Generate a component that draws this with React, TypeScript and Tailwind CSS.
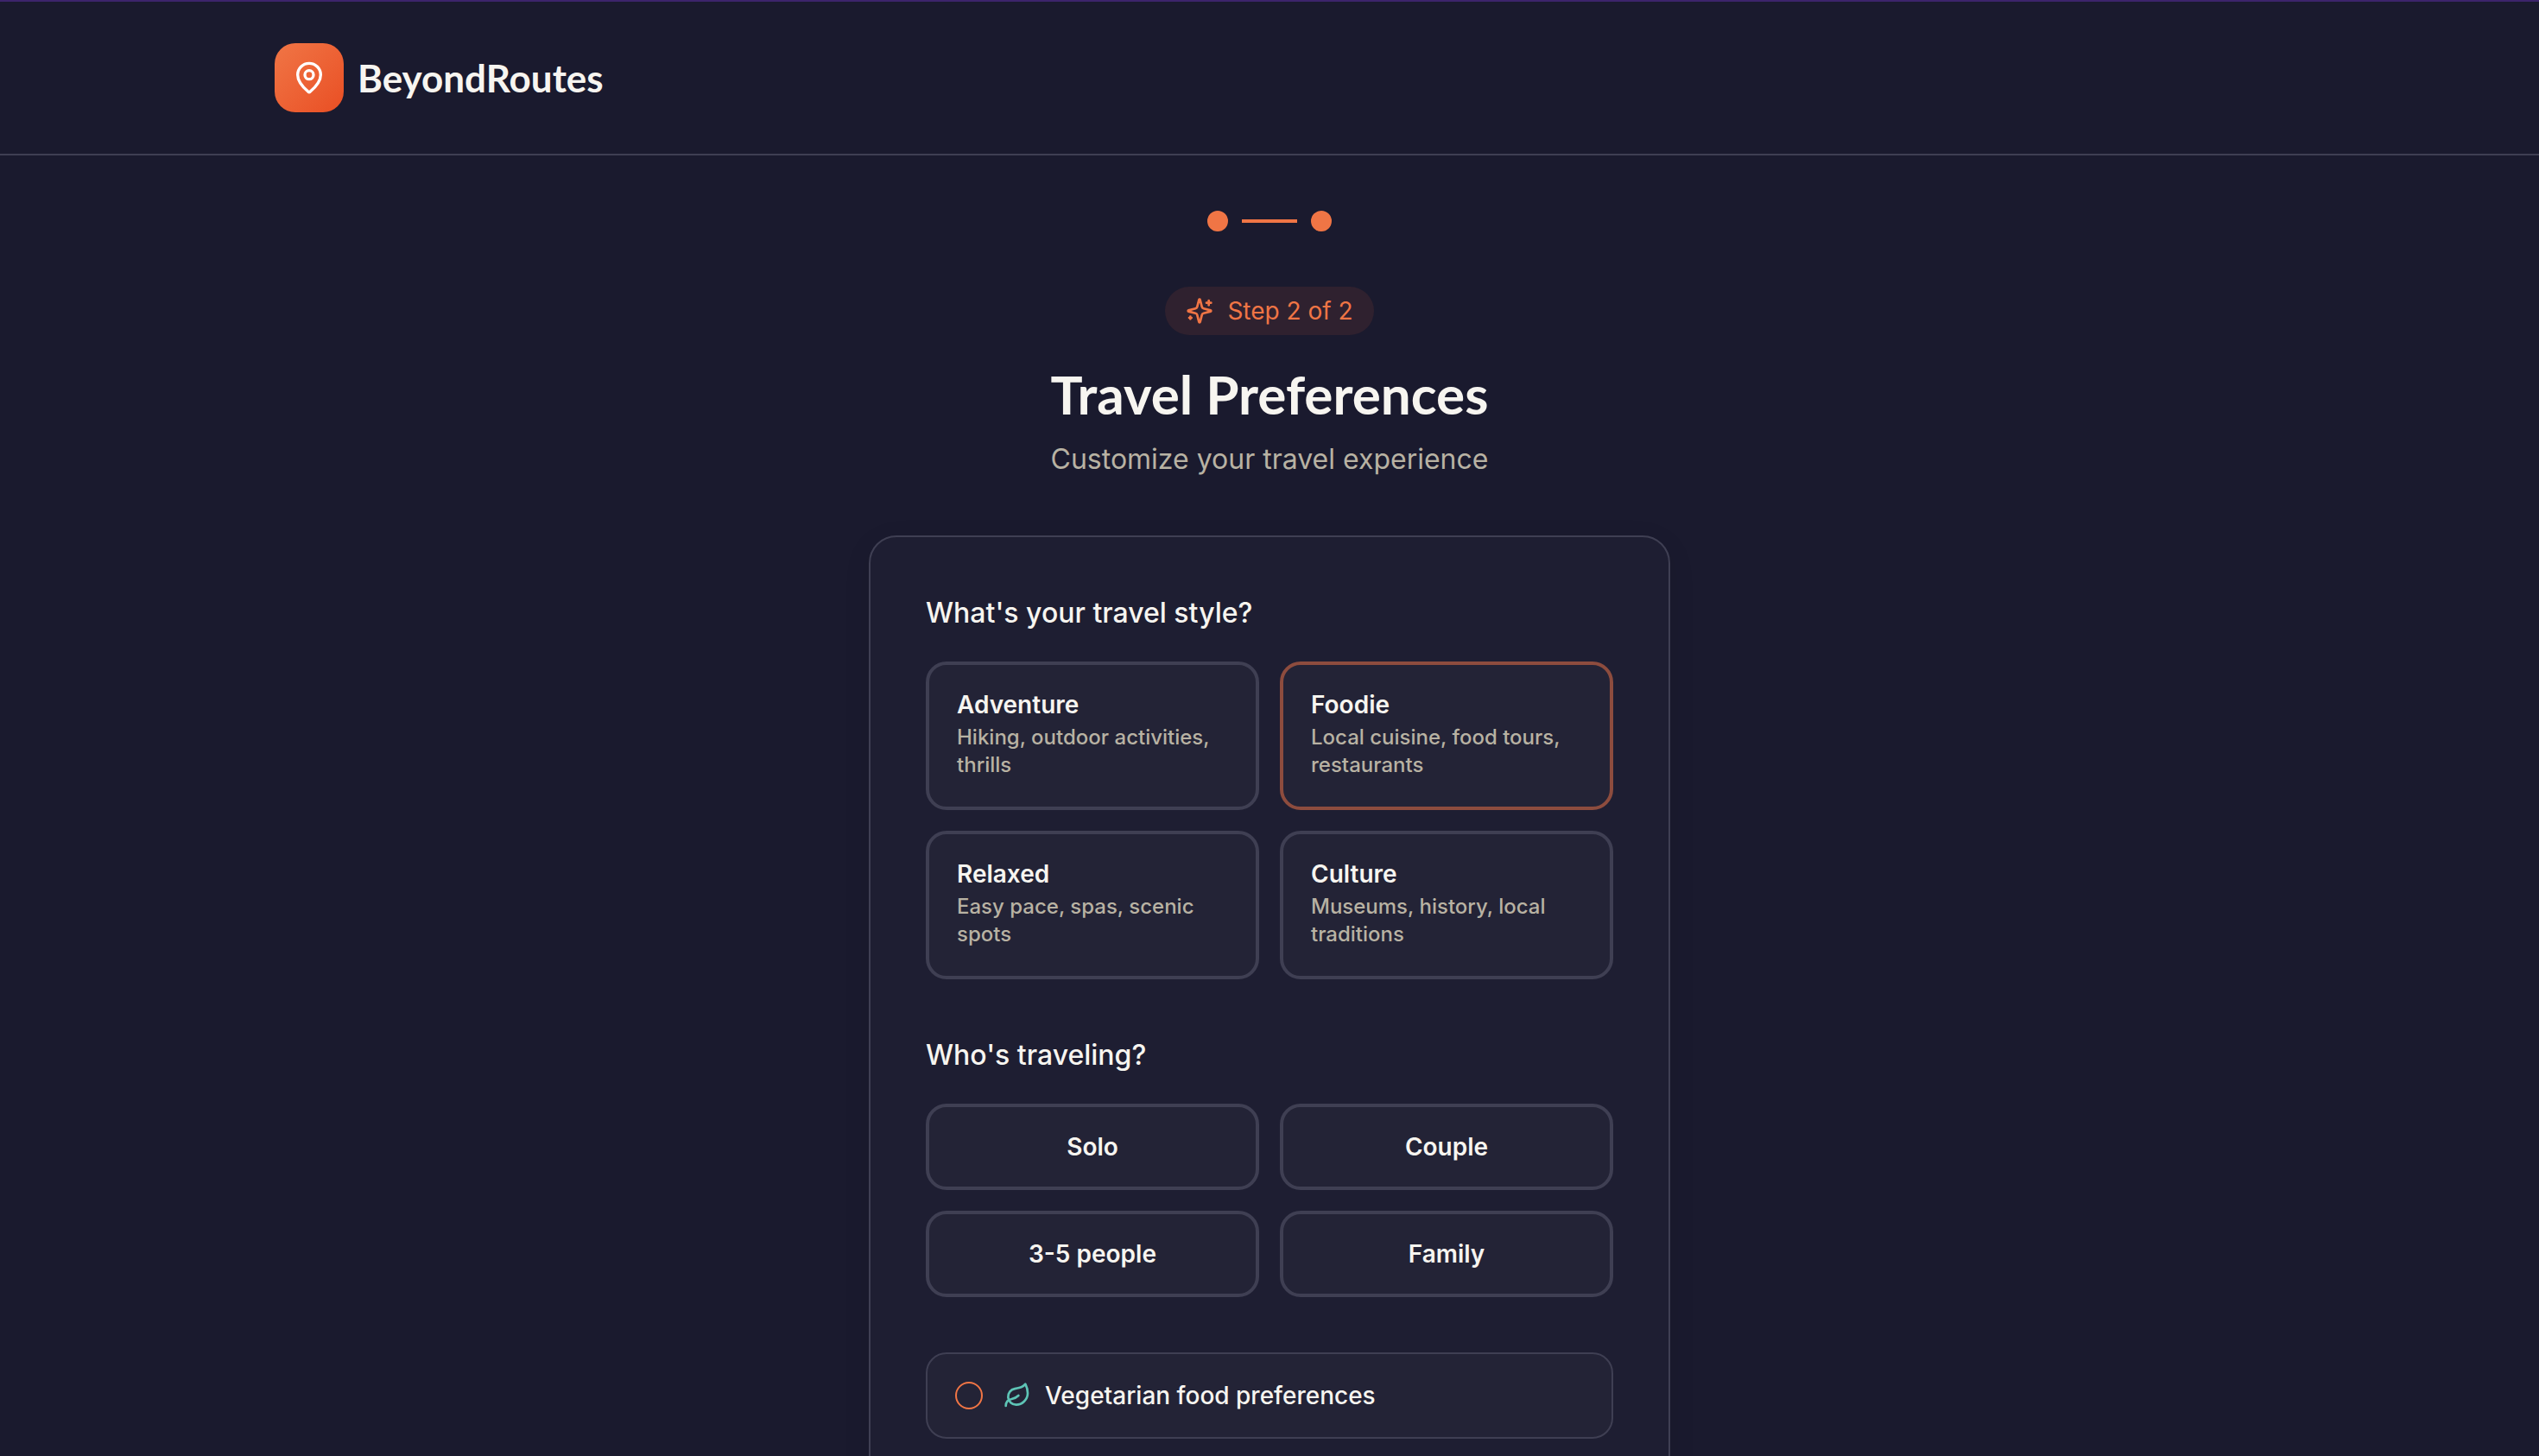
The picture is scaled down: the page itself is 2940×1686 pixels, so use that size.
import React, { useState } from "react";
import { Leaf, MapPin } from "lucide-react";

const travelStyles = [
  { name: "Adventure", description: "Hiking, outdoor activities, thrills" },
  { name: "Foodie", description: "Local cuisine, food tours, restaurants" },
  { name: "Relaxed", description: "Easy pace, spas, scenic spots" },
  { name: "Culture", description: "Museums, history, local traditions" },
];

const groupSizes = ["Solo", "Couple", "3-5 people", "Family"];

// Star with a plus at the top right and a small one at the bottom left
const SparklesIcon = () => {
  return (
    <svg
      className="size-8"
      viewBox="0 0 24 24"
      fill="none"
      stroke="currentColor"
      strokeWidth="2"
      strokeLinecap="round"
      strokeLinejoin="round"
      aria-hidden="true"
    >
      <path d="M9.937 15.5A2 2 0 0 0 8.5 14.063l-6.135-1.582a.5.5 0 0 1 0-.962L8.5 9.936A2 2 0 0 0 9.937 8.5l1.582-6.135a.5.5 0 0 1 .963 0L14.063 8.5A2 2 0 0 0 15.5 9.937l6.135 1.581a.5.5 0 0 1 0 .964L15.5 14.063a2 2 0 0 0-1.437 1.437l-1.582 6.135a.5.5 0 0 1-.963 0z" />
      <path d="M20 3v4" />
      <path d="M22 5h-4" />
      <path d="M4 17v2" />
      <path d="M5 18H3" />
    </svg>
  );
};

// Header
const Header = () => {
  return (
    <header className="border-t-2 border-b-2 border-t-[#3d246c] border-b-[#3f3f53] py-12">
      <div className="max-w-[2304px] mx-auto flex items-center gap-4">
        <div className="size-20 rounded-3xl bg-linear-to-br from-[#f07545] to-[#e94e23] flex items-center justify-center">
          <MapPin className="size-10 text-white" />
        </div>
        <span className="font-['Lato',sans-serif] text-[44px] leading-[56px] font-bold text-[#f7f5f0]">
          BeyondRoutes
        </span>
      </div>
    </header>
  );
};

// Two dots joined by a line
const StepIndicator = () => {
  return (
    <div className="flex items-center justify-center gap-4">
      <div className="size-6 rounded-full bg-[#f07545]" />
      <div className="w-16 h-1 bg-[#f07545]" />
      <div className="size-6 rounded-full bg-[#f07545]" />
    </div>
  );
};

export default function App() {
  const [style, setStyle] = useState("Foodie");
  const [group, setGroup] = useState("");

  return (
    <div className="h-screen overflow-hidden bg-[#1a1a2e] font-['Inter',sans-serif] text-[#f7f5f0]">
      <Header />

      <main className="max-w-[1024px] mx-auto px-12 pt-16">
        <StepIndicator />

        {/* Title */}
        <div className="mt-16 text-center">
          <div className="inline-flex items-center gap-4 rounded-full bg-[#2f212f] px-6 py-2 text-[28px] leading-[40px] text-[#f07545] align-top">
            <SparklesIcon />
            Step 2 of 2
          </div>
          <h1 className="mt-8 font-['Lato',sans-serif] text-[62px] leading-[72px] font-bold">
            Travel Preferences
          </h1>
          <p className="mt-4 text-[32px] leading-[48px] text-[#b8b2a3]">
            Customize your travel experience
          </p>
        </div>

        {/* Preferences card */}
        <div className="mt-16 flex flex-col gap-16 rounded-[32px] border-2 border-[#3f3f53] bg-[#1e1e32] p-16 shadow-[0_8px_32px_rgba(0,0,0,0.08)]">
          <section>
            <h2 className="text-[32px] leading-[48px] font-medium">
              What&apos;s your travel style?
            </h2>
            <div className="mt-8 grid grid-cols-2 gap-6">
              {travelStyles.map((item) => (
                <button
                  key={item.name}
                  type="button"
                  aria-pressed={style === item.name}
                  onClick={() => setStyle(item.name)}
                  className={`rounded-3xl border-4 bg-[#232336] p-8 text-left ${
                    style === item.name
                      ? "border-[#8d4c3e]"
                      : "border-[#3f3f53]"
                  }`}
                >
                  <div className="text-[28px] leading-[28px] font-semibold">
                    {item.name}
                  </div>
                  <div className="mt-2 text-[24px] leading-[32px] font-medium text-[#b8b2a3]">
                    {item.description}
                  </div>
                </button>
              ))}
            </div>
          </section>

          <section>
            <h2 className="text-[32px] leading-[48px] font-medium">
              Who&apos;s traveling?
            </h2>
            <div className="mt-8 grid grid-cols-2 gap-6">
              {groupSizes.map((size) => (
                <button
                  key={size}
                  type="button"
                  aria-pressed={group === size}
                  onClick={() => setGroup(size)}
                  className={`rounded-3xl border-4 bg-[#232336] p-8 text-[28px] leading-[28px] font-semibold ${
                    group === size ? "border-[#8d4c3e]" : "border-[#3f3f53]"
                  }`}
                >
                  {size}
                </button>
              ))}
            </div>
          </section>

          <div className="flex items-center rounded-3xl border-2 border-[#3f3f53] bg-[#232336] px-8 py-7">
            <input
              id="vegetarian"
              type="checkbox"
              className="size-8 appearance-none rounded-full border-2 border-[#f07545] checked:bg-[#f07545]"
            />
            <label
              htmlFor="vegetarian"
              className="ml-6 flex items-center gap-4 text-[28px] leading-[40px] font-medium"
            >
              <Leaf className="size-8 text-[#5ec4b6]" />
              Vegetarian food preferences
            </label>
          </div>
        </div>
      </main>
    </div>
  );
}
